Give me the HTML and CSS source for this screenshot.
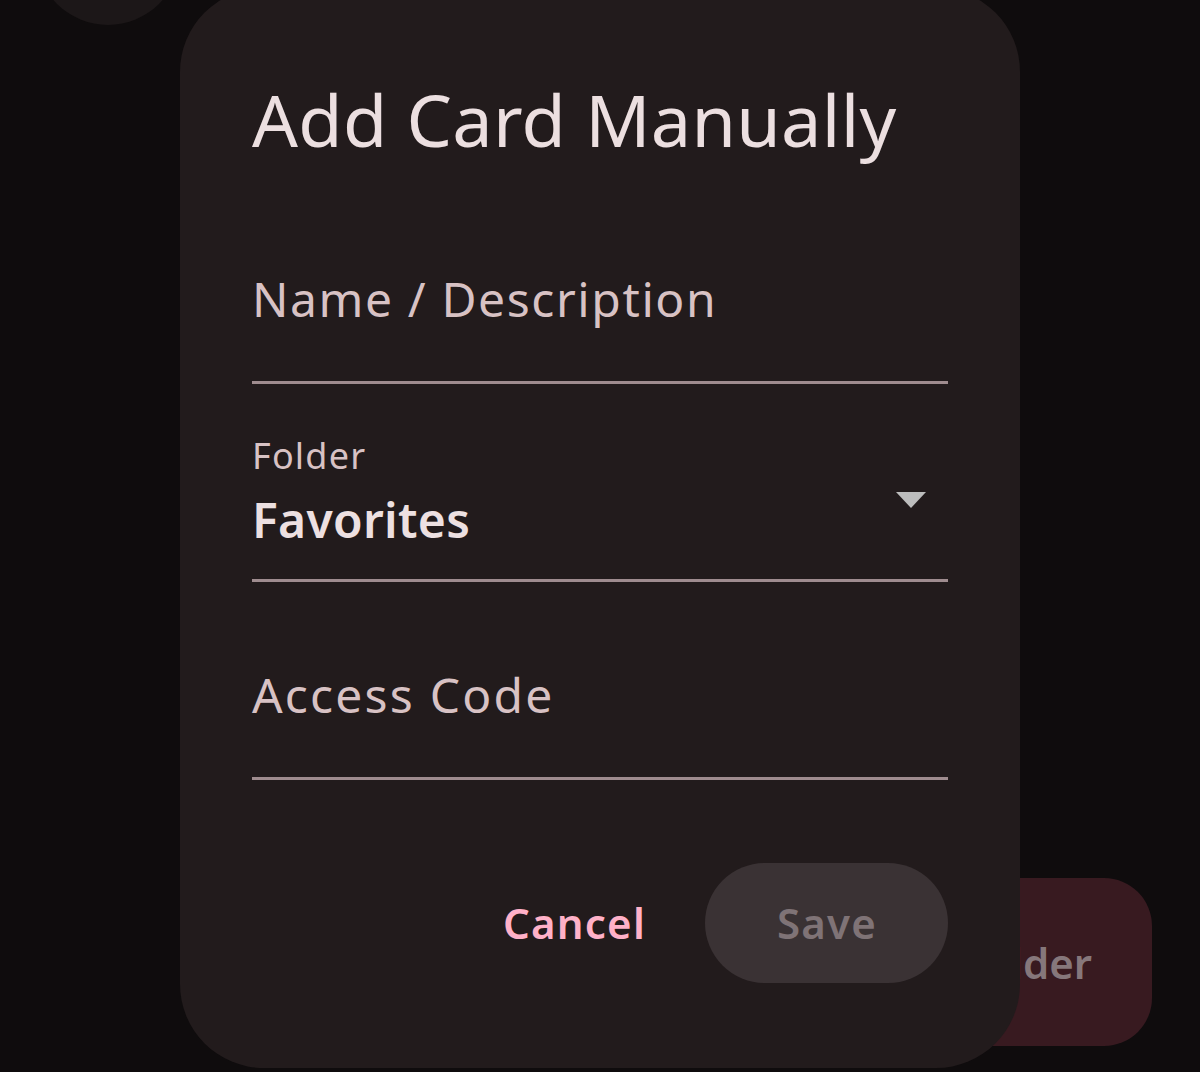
FILE: index.html
```html
<!DOCTYPE html>
<html lang="en">
<head>
<meta charset="utf-8">
<title>Add Card Manually</title>
<link rel="stylesheet" href="styles.css">
</head>
<body>
<div class="screen">
  <div class="avatar"></div>
  <svg class="peek" viewBox="0 0 40 12" width="40" height="12">
    <path d="M3 10l3-5M18 5l3-5M29 3l2-3" stroke="#6c6566" stroke-width="3" fill="none"/>
  </svg>
  <button class="fab">
    <svg class="fab-icon" viewBox="0 0 24 24" width="72" height="72"><path fill="#86777b" d="M20 6h-8l-2-2H4c-1.1 0-2 .9-2 2v12c0 1.1.9 2 2 2h16c1.1 0 2-.9 2-2V8c0-1.1-.9-2-2-2zm-1 8h-3v3h-2v-3h-3v-2h3V9h2v3h3v2z"/></svg>
    <span class="fab-text">New Folder</span>
  </button>

  <div class="dialog">
    <h1 class="title">Add Card Manually</h1>

    <div class="field field-name">
      <div class="placeholder">Name / Description</div>
    </div>

    <div class="field field-folder">
      <div class="folder-text">
        <div class="label">Folder</div>
        <div class="value">Favorites</div>
      </div>
      <svg class="caret" viewBox="0 0 30 16" width="30" height="16"><path d="M0 0h30L15 16z" fill="#bdbdbd"/></svg>
    </div>

    <div class="field field-code">
      <div class="placeholder">Access Code</div>
    </div>

    <div class="actions">
      <button class="btn btn-text">Cancel</button>
      <button class="btn btn-filled">Save</button>
    </div>
  </div>
</div>
</body>
</html>
```
FILE: styles.css
```css
* { box-sizing: border-box; }
html, body { margin: 0; padding: 0; }
body {
  background: #0f0c0d;
  font-family: "Noto Sans", "Open Sans", sans-serif;
  width: 1200px;
  height: 1072px;
  overflow: hidden;
}
.screen {
  position: relative;
  width: 1200px;
  height: 1072px;
  overflow: hidden;
}
.avatar {
  position: absolute;
  left: 36px;
  top: -119px;
  width: 144px;
  height: 144px;
  border-radius: 50%;
  background: #1c1718;
}
.peek {
  position: absolute;
  left: 216px;
  top: 0;
}
.fab {
  position: absolute;
  right: 48px;
  top: 878px;
  height: 168px;
  border: 0;
  border-radius: 48px;
  background: #381a20;
  display: flex;
  align-items: center;
  gap: 36px;
  padding: 0 60px 0 48px;
  font-family: inherit;
}
.fab-text {
  font-size: 42px;
  font-weight: 600;
  color: #86777b;
  letter-spacing: 0;
}
.dialog {
  position: absolute;
  left: 180px;
  top: -12px;
  width: 840px;
  height: 1080px;
  background: #221b1c;
  border-radius: 84px;
  padding: 83px 72px 0;
  display: flex;
  flex-direction: column;
}
.title {
  margin: 0;
  font-size: 72px;
  line-height: 96px;
  font-weight: 400;
  color: #ecdfe0;
  letter-spacing: 0.3px;
  white-space: nowrap;
}
.field {
  border-bottom: 3px solid #9f8c8f;
}
.placeholder {
  font-size: 48px;
  line-height: 64px;
  color: #d8c2c4;
  letter-spacing: 1.6px;
  padding-bottom: 50px;
}
.field-name {
  margin-top: 100px;
}
.field-folder {
  margin-top: 48px;
  display: flex;
  justify-content: space-between;
  align-items: flex-start;
}
.folder-text {
  display: flex;
  flex-direction: column;
  gap: 8px;
  padding-bottom: 27px;
}
.label {
  font-size: 36px;
  line-height: 48px;
  color: #d8c2c4;
  letter-spacing: 1.2px;
}
.value {
  font-size: 48px;
  line-height: 64px;
  font-weight: 600;
  color: #ede0e1;
  letter-spacing: 0.3px;
}
.caret {
  margin-top: 60px;
  margin-right: 22px;
}
.field-code {
  margin-top: 81px;
}
.field-code .placeholder {
  letter-spacing: 2.2px;
}
.actions {
  margin-top: 83px;
  display: flex;
  justify-content: flex-end;
  gap: 24px;
}
.btn {
  height: 120px;
  border: 0;
  border-radius: 60px;
  font-family: inherit;
  font-size: 42px;
  font-weight: 600;
  letter-spacing: 1.2px;
  line-height: 120px;
  background: transparent;
}
.btn-text {
  color: #ffb1c8;
  padding: 0 35px 0 36px;
}
.btn-filled {
  background: #3a3234;
  color: #7f7376;
  padding: 0 71px 0 72px;
}
```
